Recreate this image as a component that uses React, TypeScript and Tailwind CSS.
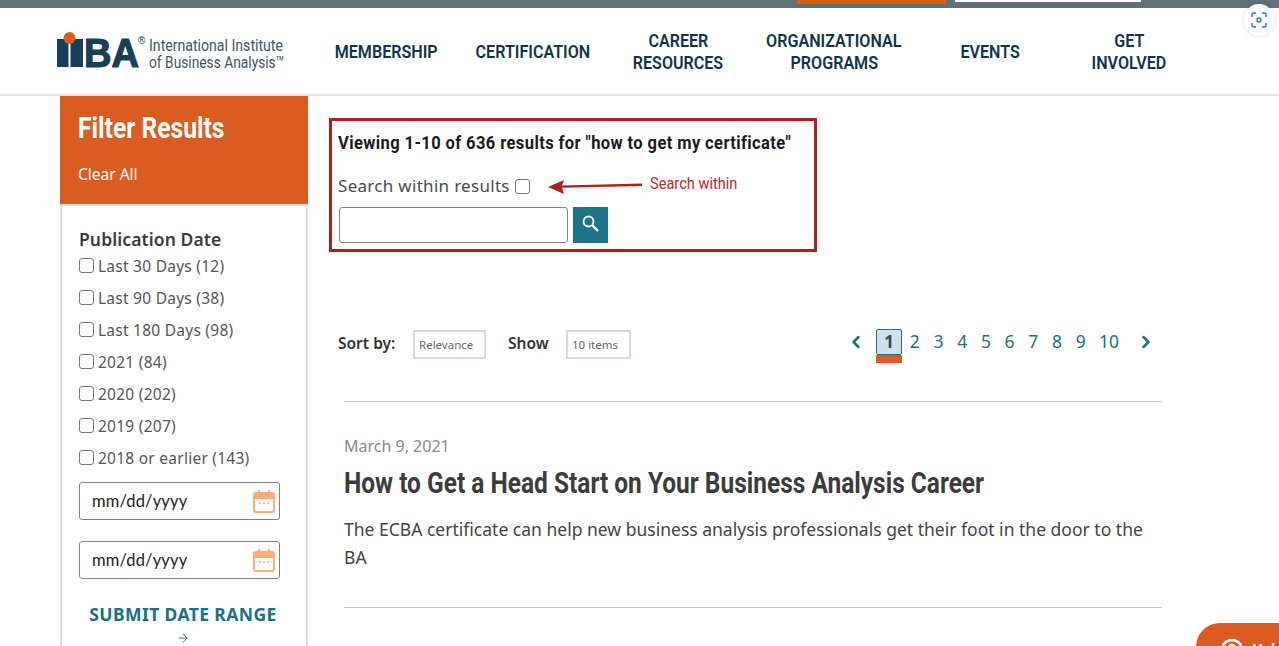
import { ChevronLeft, ChevronRight, ArrowRight, CircleHelp } from "lucide-react";

const NAV_ITEMS = [
  { label: ["MEMBERSHIP"], w: "w-[148px]" },
  { label: ["CERTIFICATION"], w: "w-[145px]" },
  { label: ["CAREER", "RESOURCES"], w: "w-[146px]" },
  { label: ["ORGANIZATIONAL", "PROGRAMS"], w: "w-[166px]" },
  { label: ["EVENTS"], w: "w-[146px]" },
  { label: ["GET", "INVOLVED"], w: "w-[132px]" },
];

const DATE_FILTERS = [
  "Last 30 Days (12)",
  "Last 90 Days (38)",
  "Last 180 Days (98)",
  "2021 (84)",
  "2020 (202)",
  "2019 (207)",
  "2018 or earlier (143)",
];

const PAGES = ["2", "3", "4", "5", "6", "7", "8", "9", "10"];

const sans = "font-['Noto_Sans',sans-serif]";
const cond = "font-['Roboto',sans-serif]";

function Logo() {
  return (
    <div className="flex items-center ml-[57px] w-[255px] shrink-0">
      <svg width="92" height="36" viewBox="0 0 92 36" className="shrink-0 overflow-visible -mt-[2px]">
        <rect x="0" y="7" width="11.5" height="28" fill="#173f55" />
        <rect x="13.5" y="7" width="12.5" height="28" fill="#173f55" />
        <circle cx="12.5" cy="6" r="6" fill="#dc5d20" />
        <text x="27" y="35" fill="#173f55" fontFamily="Liberation Sans" fontWeight="700" fontSize="40" textLength="55" lengthAdjust="spacingAndGlyphs" stroke="#173f55" strokeWidth="1.2">
          BA
        </text>
        <text x="81" y="12" fill="#173f55" fontFamily="Liberation Sans" fontSize="10">®</text>
      </svg>
      <div className={`${cond} text-[#3f5666] text-[17px] leading-[17px] whitespace-nowrap mt-[6px]`}>
        <span className="block origin-left scale-x-[.83]">International Institute</span>
        <span className="block origin-left scale-x-[.81]">of Business Analysis™</span>
      </div>
    </div>
  );
}

function DateInput() {
  return (
    <div className="flex items-center justify-between h-[38px] w-[201px] border border-[#808080] rounded-[3px] pl-3 pr-[4px]">
      <span className="font-['Lato',sans-serif] text-[16.5px] tracking-[.15px] text-[#222]">mm/dd/yyyy</span>
      <svg width="22" height="24" viewBox="0 0 22 24" fill="none">
        <rect x="1" y="4" width="20" height="19" rx="2" stroke="#fdac7a" strokeWidth="2" />
        <path d="M1 5h20v5H1z" fill="#fdac7a" />
        <rect x="5" y="1" width="2" height="5" fill="#fdac7a" />
        <rect x="15" y="1" width="2" height="5" fill="#fdac7a" />
        <path d="M6 14h2M10 14h2M14 14h2" stroke="#fdac7a" strokeWidth="1.5" />
      </svg>
    </div>
  );
}

function Sidebar() {
  return (
    <aside className="w-[248px] shrink-0 ml-[60px] border-x-2 border-[#d3dcdf] h-[551px]">
      <div className="-mx-[2px] h-[110px] bg-[#db5c20] border-b-2 border-b-[#d3dcdf] pl-[18px] pt-[14px]">
        <h2 className={`${cond} font-bold text-white text-[29px] leading-[37px] whitespace-nowrap origin-left scale-x-[.85]`}>Filter Results</h2>
        <a className={`${sans} block mt-[17px] text-white text-[15.5px] leading-[20px]`}>Clear All</a>
      </div>
      <div className="pl-[17px] pt-[22px]">
        <h3 className={`${sans} font-semibold text-[#3b3b3b] text-[17.5px] tracking-[.1px] leading-[22px]`}>Publication Date</h3>
        <ul className="mt-[1px]">
          {DATE_FILTERS.map((f) => (
            <li key={f} className={`${sans} flex items-center h-[32px] text-[#555] text-[15.5px] tracking-[.25px]`}>
              <span className="w-[15px] h-[15px] border border-[#767676] rounded-[3px] mr-[4px] -mt-[3px] shrink-0" />
              {f}
            </li>
          ))}
        </ul>
        <div className="flex flex-col gap-[21px] mt-[7px]">
          <DateInput />
          <DateInput />
        </div>
        <div className="w-[208px] text-center mt-[23px]">
          <div className={`${sans} font-bold text-[#1b6f86] text-[17.5px] tracking-[.4px] leading-[24px] whitespace-nowrap`}>SUBMIT DATE RANGE</div>
          <ArrowRight className="mx-auto mt-[5px] text-[#1b6f86]" size={14} strokeWidth={1.5} />
        </div>
      </div>
    </aside>
  );
}

function SearchBox() {
  return (
    <div className="w-[488px] h-[134px] border-[3px] border-[#b3201c] pl-[6px] pt-[9px]">
      <h1 className={`${cond} font-bold text-[#1a1a1a] text-[19px] tracking-[.45px] leading-[26px] whitespace-nowrap origin-left scale-x-[.87]`}>
        Viewing 1-10 of 636 results for "how to get my certificate"
      </h1>
      <div className="flex items-center mt-[17px] h-[26px]">
        <span className={`${sans} text-[#4a4a4a] text-[17px] tracking-[.3px] whitespace-nowrap`}>Search within results</span>
        <span className="w-[15px] h-[15px] border border-[#767676] rounded-[3px] ml-[5px] shrink-0" />
        <svg width="96" height="16" viewBox="0 0 96 16" className="ml-[18px] shrink-0 mt-[1px]">
          <path d="M0 8 16 1 14 6.5 94 4.5V7L14 8.8 16 15Z" fill="#b3201c" />
        </svg>
        <span className={`${cond} ml-[6px] text-[#c2281f] text-[16.5px] whitespace-nowrap origin-left scale-x-[.885] -mt-[4px]`}>Search within</span>
      </div>
      <div className="flex gap-[5px] mt-[8px] ml-[1px]">
        <div className="w-[229px] h-[36px] border border-[#858585] rounded-[3px]" />
        <button className="w-[35px] h-[36px] bg-[#1b7489] flex items-center justify-center pb-[3px]">
          <svg width="17" height="17" viewBox="0 0 17 17" fill="none" stroke="white">
            <circle cx="6.5" cy="6.5" r="5" strokeWidth="1.8" />
            <path d="M10.5 10.5 16 16" strokeWidth="2.4" />
          </svg>
        </button>
      </div>
    </div>
  );
}

function SortBar() {
  return (
    <div className={`${sans} flex items-center h-[33px] ml-[9px] w-[860px]`}>
      <span className="font-semibold text-[#333] text-[15.5px] w-[75px] shrink-0 whitespace-nowrap mb-[2px]">Sort by:</span>
      <div className="flex items-center w-[73px] shrink-0 h-[29px] border-2 border-[#d3dcdf] pl-[4px] text-[11.5px] text-[#666]">Relevance</div>
      <span className="font-semibold text-[#333] text-[15.5px] ml-[22px] w-[58px] shrink-0 mb-[2px]">Show</span>
      <div className="flex items-center w-[65px] shrink-0 h-[29px] border-2 border-[#d3dcdf] pl-[4px] text-[11.5px] text-[#666]">10 items</div>
      <nav className="flex items-center ml-[215px] mb-[6px] text-[#1b6f86] shrink-0">
        <ChevronLeft size={20} strokeWidth={3} />
        <div className="relative ml-[10px] w-[26px] h-[26px] bg-[#d3e0e9] border border-[#1b6f86] rounded-[2px] text-center text-[#444] font-bold text-[17px] leading-[24px]">
          1
          <span className="absolute -left-px -right-px top-[25px] h-[8px] bg-[#db5c20]" />
        </div>
        <div className="flex ml-[1px] text-[17.5px]">
          {PAGES.map((p) => (
            <span key={p} className={p === "10" ? "w-[33px] text-center" : "w-[23.7px] text-center"}>{p}</span>
          ))}
        </div>
        <ChevronRight className="ml-[10px]" size={20} strokeWidth={3} />
      </nav>
    </div>
  );
}

function Result() {
  return (
    <article className="ml-[15px] w-[818px] mt-[40px] border-y border-[#c5c9cb] h-[207px] pt-[33px]">
      <div className={`${sans} text-[#8a8a8a] text-[16px] leading-[22px]`}>March 9, 2021</div>
      <h2 className={`${cond} mt-[8px] font-bold text-[#3c3c3c] text-[29px] leading-[36px] whitespace-nowrap origin-left scale-x-[.844]`}>
        How to Get a Head Start on Your Business Analysis Career
      </h2>
      <p className={`${sans} mt-[14px] text-[#444] text-[17.53px] leading-[28px] w-[812px]`}>
        The ECBA certificate can help new business analysis professionals get their foot in the door to the BA
      </p>
    </article>
  );
}

export default function App() {
  return (
    <div className="relative h-[646px] w-[1279px] overflow-hidden bg-white">
      <div className="flex h-[8px] bg-[#5f7078]">
        <div className="ml-[797px] w-[149px] h-[4px] bg-[#db5c20]" />
        <div className="ml-[9px] w-[186px] h-[2px] bg-white" />
      </div>
      <header className="flex items-center h-[88px] border-b-2 border-[#e3e5e6]">
        <Logo />
        <nav className={`${cond} flex font-semibold text-[#12344a] text-[18.5px] leading-[22px] pt-[1px]`}>
          {NAV_ITEMS.map((n) => (
            <a key={n.label[0]} className={`${n.w} flex flex-col items-center justify-center text-center`}>
              {n.label.map((l) => (
                <span key={l} className="block whitespace-nowrap scale-x-[.87]">{l}</span>
              ))}
            </a>
          ))}
        </nav>
      </header>
      <main className="flex">
        <Sidebar />
        <section className="ml-[21px] pt-[22px]">
          <SearchBox />
          <div className="mt-[76px]">
            <SortBar />
          </div>
          <Result />
        </section>
      </main>
      {/* floating bits that sit over the page */}
      <button className="absolute top-[4px] right-[5px] w-[30px] h-[32px] rounded-full bg-white shadow-[0_0_4px_rgba(0,0,0,.15)] flex items-center justify-center">
        <svg width="16" height="16" viewBox="0 0 16 16" fill="none" stroke="#1a73e8" strokeWidth="1.4">
          <path d="M1 5V3a2 2 0 0 1 2-2h2M11 1h2a2 2 0 0 1 2 2v2M15 11v2a2 2 0 0 1-2 2h-2M5 15H3a2 2 0 0 1-2-2v-2" />
          <circle cx="8" cy="8" r="2" />
        </svg>
      </button>
      <div className="absolute left-[1196px] top-[623px] w-[120px] h-[50px] rounded-tl-[24px] rounded-tr-[24px] bg-[#db5c20] pl-[24px] pt-[15px] flex text-white font-bold text-[14px]">
        <CircleHelp size={24} strokeWidth={2.4} />
        <span className="ml-[8px]">Help</span>
      </div>
    </div>
  );
}
